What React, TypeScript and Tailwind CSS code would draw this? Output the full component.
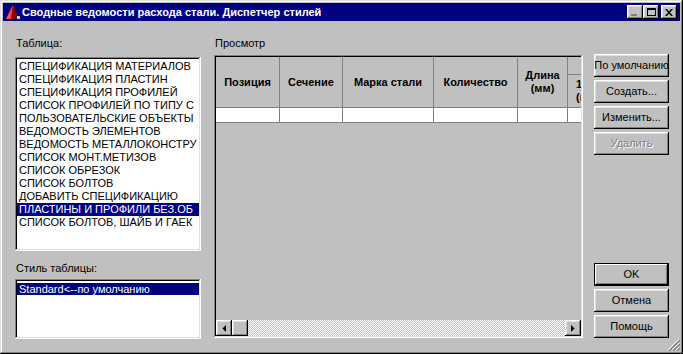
const tables = [
  'СПЕЦИФИКАЦИЯ МАТЕРИАЛОВ',
  'СПЕЦИФИКАЦИЯ ПЛАСТИН',
  'СПЕЦИФИКАЦИЯ ПРОФИЛЕЙ',
  'СПИСОК ПРОФИЛЕЙ ПО ТИПУ С',
  'ПОЛЬЗОВАТЕЛЬСКИЕ ОБЪЕКТЫ',
  'ВЕДОМОСТЬ ЭЛЕМЕНТОВ',
  'ВЕДОМОСТЬ МЕТАЛЛОКОНСТРУ',
  'СПИСОК МОНТ.МЕТИЗОВ',
  'СПИСОК ОБРЕЗОК',
  'СПИСОК БОЛТОВ',
  'ДОБАВИТЬ СПЕЦИФИКАЦИЮ',
  'ПЛАСТИНЫ И ПРОФИЛИ БЕЗ.ОБ',
  'СПИСОК БОЛТОВ, ШАЙБ И ГАЕК',
];

const columns = [
  { label: 'Позиция', w: 'w-[64px]' },
  { label: 'Сечение', w: 'w-[63px]' },
  { label: 'Марка стали', w: 'w-[91px]' },
  { label: 'Количество', w: 'w-[84px]' },
  { label: 'Длина\n(мм)', w: 'w-[50px]' },
];

const raised =
  'shadow-[inset_-1px_-1px_#000,inset_1px_1px_#fff,inset_-2px_-2px_#808080,inset_2px_2px_#dfdfdf]';
const sunken =
  'shadow-[inset_-1px_-1px_#fff,inset_1px_1px_#808080,inset_-2px_-2px_#dfdfdf,inset_2px_2px_#000]';

function Button({ label, primary, disabled }: { label: string; primary?: boolean; disabled?: boolean }) {
  return (
    <div
      className={`h-[23px] w-[75px] flex items-center justify-center whitespace-nowrap overflow-hidden bg-[#c0c0c0] text-[11px] ${
        primary
          ? 'shadow-[inset_0_0_0_1px_#000,inset_-2px_-2px_#000,inset_2px_2px_#fff,inset_-3px_-3px_#808080]'
          : raised
      } ${disabled ? 'text-[#808080] [text-shadow:1px_1px_#fff]' : 'text-black'}`}
    >
      {label}
    </div>
  );
}

function TitleButton({ children }: { children: React.ReactNode }) {
  return (
    <div className={`w-[16px] h-[14px] bg-[#c0c0c0] flex items-center justify-center ${raised}`}>
      {children}
    </div>
  );
}

function Arrow({ dir }: { dir: 'left' | 'right' }) {
  return (
    <div className={`w-[16px] h-[16px] shrink-0 bg-[#c0c0c0] flex items-center justify-center ${raised}`}>
      <svg width="4" height="7" viewBox="0 0 4 7">
        {dir === 'left' ? <polygon points="4,0 4,7 0.5,3.5" fill="#000" /> : <polygon points="0,0 0,7 3.5,3.5" fill="#000" />}
      </svg>
    </div>
  );
}

export default function App() {
  return (
    <div className="relative w-[683px] h-[354px] bg-[#c0c0c0] shadow-[inset_-1px_-1px_#000,inset_1px_1px_#dfdfdf,inset_-2px_-2px_#808080,inset_2px_2px_#fff] p-[3px] flex flex-col font-['Liberation_Sans',Arial,sans-serif] text-[11px] leading-[13px] text-black select-none">
      {/* title bar */}
      <div className="h-[18px] shrink-0 bg-[#000080] flex items-center pl-[2px] pr-[3px]">
        <svg width="16" height="16" viewBox="0 0 16 16" className="shrink-0">
          <polygon points="1,15 8,1 13,14" fill="#c81010" />
          <polygon points="8,1 6,15 1,15" fill="#f05050" />
          <polygon points="8,1 13,14 9,15 6,15" fill="#900000" />
          <rect x="12" y="12" width="3" height="3" fill="#d0d0d0" />
        </svg>
        <span className="ml-[1px] text-white font-bold whitespace-nowrap">
          Сводные ведомости расхода стали. Диспетчер стилей
        </span>
        <div className="ml-auto flex items-center">
          <TitleButton>
            <div className="w-[6px] h-[2px] bg-[#808080] mt-[6px] ml-[-2px]" />
          </TitleButton>
          <TitleButton>
            <div className="w-[9px] h-[8px] border border-black border-t-2" />
          </TitleButton>
          <div className="ml-[2px]">
            <TitleButton>
              <svg width="8" height="7" viewBox="0 0 8 7">
                <path d="M0,0 L2,0 L4,2.5 L6,0 L8,0 L5,3.5 L8,7 L6,7 L4,4.5 L2,7 L0,7 L3,3.5 Z" fill="#000" />
              </svg>
            </TitleButton>
          </div>
        </div>
      </div>

      {/* content */}
      <div className="flex flex-1">
        {/* left column */}
        <div className="ml-[12px] w-[186px] flex flex-col">
          <div className="mt-[16px] pl-[1px]">Таблица:</div>
          <div className={`mt-[7px] h-[194px] bg-white p-[2px] overflow-hidden ${sunken}`}>
            <div className="pt-[1px]">
              {tables.map((t, i) => (
                <div
                  key={t}
                  className={`h-[13px] pl-[2px] whitespace-nowrap overflow-hidden ${
                    i === 11 ? 'bg-[#000080] text-white' : ''
                  }`}
                >
                  {t}
                </div>
              ))}
            </div>
          </div>
          <div className="mt-[11px] pl-[1px]">Стиль таблицы:</div>
          <div className={`mt-[4px] h-[60px] bg-white p-[2px] ${sunken}`}>
            <div className="mt-[2px] h-[12px] pl-[2px] leading-[12px] bg-[#000080] text-white whitespace-nowrap">
              Standard&lt;--по умолчанию
            </div>
          </div>
        </div>

        {/* preview */}
        <div className="ml-[13px] w-[369px] flex flex-col">
          <div className="mt-[16px] pl-[1px]">Просмотр</div>
          <div className={`mt-[5px] h-[283px] p-[2px] flex flex-col bg-[#c0c0c0] ${sunken}`}>
            <div className="overflow-hidden flex-1 flex flex-col">
              <div className="flex w-[500px] h-[51px] border-b border-[#808080] font-bold">
                {columns.map(c => (
                  <div
                    key={c.label}
                    className={`${c.w} shrink-0 border-r border-[#808080] flex items-center justify-center text-center whitespace-pre-line`}
                  >
                    {c.label}
                  </div>
                ))}
                <div className="w-[80px] shrink-0 flex flex-col">
                  <div className="h-[18px] border-b border-[#808080]" />
                  <div className="flex-1 flex flex-col justify-center pl-[8px]">
                    <div>1 м</div>
                    <div>(кг)</div>
                  </div>
                </div>
              </div>
              <div className="flex w-[500px] h-[15px] border-b border-[#808080] bg-white">
                {columns.map(c => (
                  <div key={c.label} className={`${c.w} shrink-0 border-r border-[#808080]`} />
                ))}
              </div>
            </div>
            <div className="h-[16px] flex shrink-0">
              <Arrow dir="left" />
              <div className={`w-[16px] h-[16px] shrink-0 bg-[#c0c0c0] ${raised}`} />
              <div className="flex-1 bg-[repeating-conic-gradient(#c0c0c0_0%_25%,#ffffff_0%_50%)] bg-[length:2px_2px]" />
              <Arrow dir="right" />
            </div>
          </div>
        </div>

        {/* buttons */}
        <div className="ml-[11px] w-[75px] flex flex-col">
          <div className="mt-[33px] flex flex-col gap-[3px]">
            <Button label="По умолчанию" />
            <Button label="Создать..." />
            <Button label="Изменить..." />
            <Button label="Удалить" disabled />
          </div>
          <div className="mt-[108px] flex flex-col gap-[3px]">
            <Button label="OK" primary />
            <Button label="Отмена" />
            <Button label="Помощь" />
          </div>
        </div>
      </div>

      {/* resize grip */}
      <svg width="12" height="12" viewBox="0 0 12 12" className="absolute right-[3px] bottom-[3px]">
        <path d="M11,0 L0,11 M11,4 L4,11 M11,8 L8,11" stroke="#fff" strokeWidth="1" />
        <path d="M12,1 L1,12 M12,5 L5,12 M12,9 L9,12" stroke="#808080" strokeWidth="1.4" />
      </svg>
    </div>
  );
}
